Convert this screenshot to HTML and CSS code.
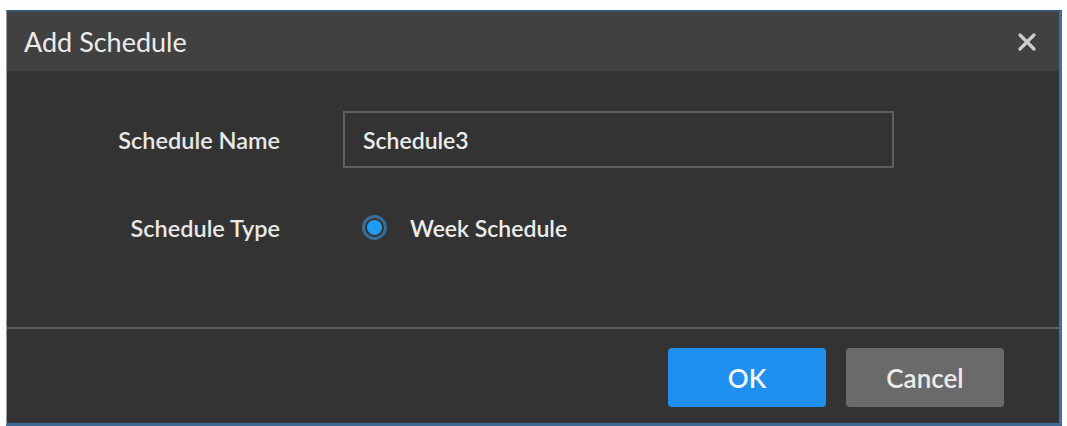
FILE: index.html
```html
<!DOCTYPE html>
<html lang="en">
<head>
<meta charset="utf-8">
<title>Add Schedule</title>
<link rel="stylesheet" href="styles.css">
</head>
<body>
<div class="dialog">
  <div class="dialog-header">
    <span class="dialog-title">Add Schedule</span>
    <span class="close-btn" aria-label="Close">
      <svg width="20" height="20" viewBox="0 0 20 20"><path d="M3 3 L17 17 M17 3 L3 17" stroke="#cfcfcf" stroke-width="3.2" stroke-linecap="round" fill="none"/></svg>
    </span>
  </div>
  <div class="dialog-body">
    <div class="form-row">
      <label class="form-label">Schedule Name</label>
      <div class="form-control"><div class="text-input">Schedule3</div></div>
    </div>
    <div class="form-row">
      <label class="form-label">Schedule Type</label>
      <div class="form-control radio-group">
        <span class="radio"><span class="radio-dot"></span></span>
        <span class="radio-text">Week Schedule</span>
      </div>
    </div>
  </div>
  <div class="dialog-footer">
    <button class="btn btn-primary">OK</button>
    <button class="btn btn-secondary">Cancel</button>
  </div>
</div>
</body>
</html>
```
FILE: styles.css
```css
html, body {
  margin: 0;
  padding: 0;
  background: #fbfdfe;
}
body {
  padding: 10px 5px 0 6px;
  font-family: Lato, "Open Sans", "Liberation Sans", sans-serif;
}
.dialog {
  background: #333333;
  border-top: 2px solid #3b546b;
  border-right: 3px solid #3f6f9f;
  border-bottom: 3px solid #3e6a93;
  border-left: 1px solid #9a9a9a;
  height: 411px;
  display: flex;
  flex-direction: column;
  color: #e6e6e6;
}
.dialog-header {
  height: 59px;
  flex: none;
  background: #414141;
  display: flex;
  align-items: center;
  justify-content: space-between;
  padding: 0 22px 0 17px;
}
.dialog-title {
  font-size: 27px;
  color: #ececec;
}
.close-btn {
  display: flex;
  width: 20px;
  height: 20px;
}
.dialog-body {
  box-sizing: border-box;
  flex: none;
  padding-top: 40px;
  display: flex;
  flex-direction: column;
  gap: 31px;
  height: 258px;
  border-bottom: 2px solid #5e5e5e;
}
.form-row {
  display: grid;
  grid-template-columns: 273px 551px;
  column-gap: 63px;
  align-items: center;
  height: 57px;
}
.form-label {
  text-align: right;
  font-size: 23.5px;
  font-weight: 600;
  color: #e8e8e8;
}
.text-input {
  box-sizing: border-box;
  height: 57px;
  border: 2px solid #5f5f5f;
  padding: 0 18px;
  display: flex;
  align-items: center;
  font-size: 23px;
  font-weight: 600;
  color: #ececec;
}
.radio-group {
  display: flex;
  align-items: center;
  padding-left: 19px;
  gap: 23px;
}
.radio {
  box-sizing: border-box;
  width: 25px;
  height: 25px;
  border-radius: 50%;
  border: 3px solid #3a6e95;
  display: flex;
  align-items: center;
  justify-content: center;
}
.radio-dot {
  width: 15px;
  height: 15px;
  border-radius: 50%;
  background: #1f9cf2;
}
.radio-text {
  font-size: 23px;
  font-weight: 600;
  color: #ececec;
}
.dialog-footer {
  flex: 1;
  display: flex;
  justify-content: flex-end;
  align-items: flex-start;
  padding: 19px 55px 0 0;
  gap: 20px;
}
.btn {
  width: 158px;
  height: 59px;
  border: none;
  border-radius: 4px;
  font-family: Lato, "Open Sans", "Liberation Sans", sans-serif;
  font-size: 26px;
  font-weight: 600;
  color: #f4f4f4;
}
.btn-primary {
  background: #1f8ff0;
}
.btn-secondary {
  background: #6a6a6a;
  color: #ececec;
}
```
